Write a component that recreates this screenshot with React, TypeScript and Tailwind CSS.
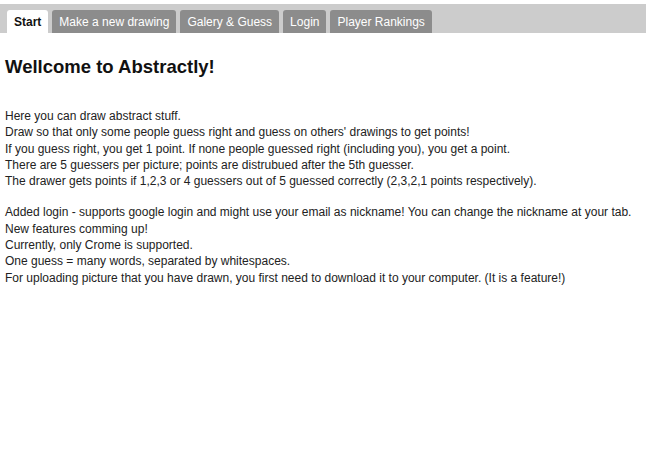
const tabs = ['Make a new drawing', 'Galery & Guess', 'Login', 'Player Rankings'];

const intro = [
  'Here you can draw abstract stuff.',
  "Draw so that only some people guess right and guess on others' drawings to get points!",
  'If you guess right, you get 1 point. If none people guessed right (including you), you get a point.',
  'There are 5 guessers per picture; points are distrubued after the 5th guesser.',
  'The drawer gets points if 1,2,3 or 4 guessers out of 5 guessed correctly (2,3,2,1 points respectively).',
];

const news = [
  'Added login - supports google login and might use your email as nickname! You can change the nickname at your tab.',
  'New features comming up!',
  'Currently, only Crome is supported.',
  'One guess = many words, separated by whitespaces.',
  'For uploading picture that you have drawn, you first need to download it to your computer. (It is a feature!)',
];

export default function App() {
  return (
    <div className="min-h-[450px] w-[646px] bg-white font-['Liberation_Sans',Arial,sans-serif] pt-[4px]">
      {/* Tab bar */}
      <div className="flex h-[29px] items-end gap-[4px] bg-[#cccccc] px-[7px]">
        <div className="flex h-[23px] items-center rounded-t-[3px] bg-white px-[7px] text-[12px] font-bold text-[#111]">
          Start
        </div>
        {tabs.map((t) => (
          <div
            key={t}
            className="flex h-[23px] items-center rounded-t-[3px] bg-[#8c8c8c] px-[7px] text-[12px] text-white"
          >
            {t}
          </div>
        ))}
      </div>

      {/* Content */}
      <div className="px-[5px]">
        <h2 className="mt-[22px] text-[18.5px] font-bold leading-[24px] text-[#111]">Wellcome to Abstractly!</h2>
        <div className="mt-[29px] text-[12px] leading-[16.3px] text-[#222]">
          {intro.map((l) => (
            <p key={l}>{l}</p>
          ))}
          <p className="h-[15px]" />
          {news.map((l) => (
            <p key={l}>{l}</p>
          ))}
        </div>
      </div>
    </div>
  );
}
